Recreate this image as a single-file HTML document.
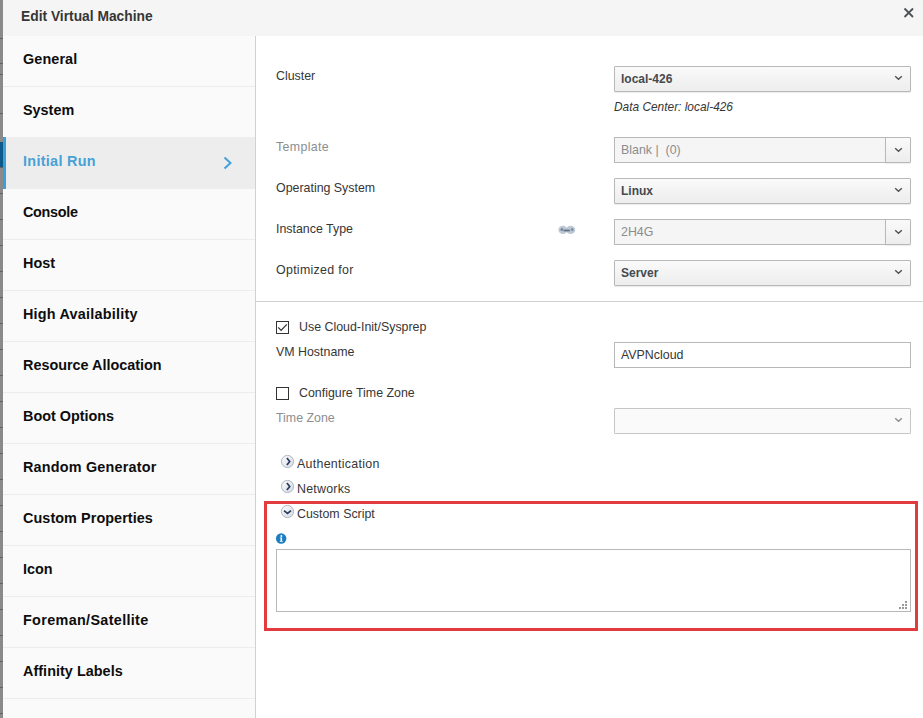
<!DOCTYPE html>
<html><head><meta charset="utf-8">
<style>
*{box-sizing:border-box;margin:0;padding:0}
html,body{width:923px;height:718px;overflow:hidden;background:#fff;font-family:"Liberation Sans",sans-serif}
.a{position:absolute}
.t{position:absolute;white-space:nowrap;line-height:16px}
#strip{left:0;top:0;width:3px;height:718px;background:#8a8a8a;background-image:repeating-linear-gradient(to bottom,transparent 0,transparent 38px,#5f5f5f 38px,#5f5f5f 39px,transparent 39px,transparent 26px)}
#hdr{left:3px;top:0;width:920px;height:36px;background:#f5f5f5}
#side{left:3px;top:36px;width:252px;height:682px;background:#fafafa}
#sideb{left:255px;top:36px;width:1px;height:682px;background:#d1d1d1}
.sep{position:absolute;left:3px;width:252px;height:1px;background:#ececec}
.nav{font-weight:bold;font-size:14.4px;color:#0d0d0d;left:23px}
.lbl{font-size:12.4px;color:#363636;left:276px}
.dis{color:#8b8d8f}
.sel{position:absolute;left:614px;width:297px;height:26px;border:1px solid #b8b8b8;border-radius:1px;background:linear-gradient(#fafafa,#ededed);box-shadow:0 1px 1px rgba(3,3,3,.08)}
.chev{position:absolute;width:9px;height:6px}
.sv{font-size:12px;font-weight:bold;color:#454a50;left:621px}
</style></head><body>
<svg class="a" style="left:0;top:0" width="3" height="718"><rect width="3" height="718" fill="#8a8a8a"/><g fill="#626262"><rect x="0" y="38" width="3" height="1"/><rect x="0" y="63" width="3" height="1"/><rect x="0" y="74" width="3" height="1"/><rect x="0" y="113" width="3" height="1"/><rect x="0" y="167" width="3" height="1"/><rect x="0" y="193" width="3" height="1"/><rect x="0" y="219" width="3" height="1"/><rect x="0" y="245" width="3" height="1"/><rect x="0" y="271" width="3" height="1"/><rect x="0" y="297" width="3" height="1"/><rect x="0" y="323" width="3" height="1"/><rect x="0" y="349" width="3" height="1"/><rect x="0" y="375" width="3" height="1"/><rect x="0" y="401" width="3" height="1"/><rect x="0" y="427" width="3" height="1"/><rect x="0" y="453" width="3" height="1"/><rect x="0" y="479" width="3" height="1"/><rect x="0" y="505" width="3" height="1"/><rect x="0" y="531" width="3" height="1"/><rect x="0" y="557" width="3" height="1"/><rect x="0" y="583" width="3" height="1"/><rect x="0" y="609" width="3" height="1"/><rect x="0" y="635" width="3" height="1"/><rect x="0" y="661" width="3" height="1"/><rect x="0" y="687" width="3" height="1"/><rect x="0" y="713" width="3" height="1"/></g><rect x="0" y="142" width="3" height="25" fill="#0b5a8a"/></svg>
<div id="hdr" class="a"></div>
<div class="t" style="left:21px;top:9px;font-size:13.8px;font-weight:bold;color:#363636">Edit Virtual Machine</div>
<svg class="a" style="left:903px;top:7px" width="12" height="12" viewBox="0 0 12 12"><path d="M1.5 1.5L10 10M10 1.5L1.5 10" stroke="#4d5258" stroke-width="1.8" fill="none"/></svg>

<div id="side" class="a"></div>
<div id="sideb" class="a"></div>
<div class="sep" style="top:86px"></div>
<div class="a" style="left:3px;top:137px;width:252px;height:52px;background:#ededed"></div>
<div class="a" style="left:3px;top:137px;width:3px;height:52px;background:#3c9fd8"></div>
<div class="sep" style="top:239px"></div>
<div class="sep" style="top:290px"></div>
<div class="sep" style="top:341px"></div>
<div class="sep" style="top:392px"></div>
<div class="sep" style="top:443px"></div>
<div class="sep" style="top:494px"></div>
<div class="sep" style="top:545px"></div>
<div class="sep" style="top:596px"></div>
<div class="sep" style="top:647px"></div>
<div class="sep" style="top:698px"></div>

<div class="t nav" style="top:51px;letter-spacing:0.1px">General</div>
<div class="t nav" style="top:102px">System</div>
<div class="t nav" style="top:153px;color:#47a1d6;letter-spacing:0.3px">Initial Run</div>
<div class="t nav" style="top:204px;letter-spacing:-0.3px">Console</div>
<div class="t nav" style="top:255px">Host</div>
<div class="t nav" style="top:306px;letter-spacing:0.22px">High Availability</div>
<div class="t nav" style="top:357px">Resource Allocation</div>
<div class="t nav" style="top:408px">Boot Options</div>
<div class="t nav" style="top:459px;letter-spacing:0.2px">Random Generator</div>
<div class="t nav" style="top:510px;letter-spacing:0.07px">Custom Properties</div>
<div class="t nav" style="top:561px">Icon</div>
<div class="t nav" style="top:612px;letter-spacing:0.33px">Foreman/Satellite</div>
<div class="t nav" style="top:663px;letter-spacing:0.04px">Affinity Labels</div>
<svg class="a" style="left:222px;top:155px" width="12" height="16" viewBox="0 0 12 16"><path d="M2.5 2.5L8.5 8L2.5 13.5" stroke="#45a0d6" stroke-width="2" fill="none"/></svg>

<!-- main -->
<div class="t lbl" style="top:68px">Cluster</div>
<div class="sel" style="top:66px"></div>
<div class="t sv" style="top:71px">local-426</div>
<div class="t" style="left:614px;top:99px;font-size:11.9px;font-style:italic;color:#363636">Data Center: local-426</div>

<div class="t lbl dis" style="top:139px;letter-spacing:0.35px">Template</div>
<div class="t lbl" style="top:180px">Operating System</div>
<div class="t lbl" style="top:221px">Instance Type</div>
<div class="t lbl" style="top:262px;letter-spacing:0.3px">Optimized for</div>

<div class="a" style="left:256px;top:301px;width:667px;height:1px;background:#d1d1d1"></div>

<!-- selects -->
<svg class="chev" style="left:894px;top:75px" width="9" height="6" viewBox="0 0 9 6"><path d="M1.2 1.2L4.5 4.3L7.8 1.2" stroke="#4d5258" stroke-width="1.4" fill="none"/></svg>

<div class="a" style="left:614px;top:137px;width:272px;height:26px;border:1px solid #b8b8b8;background:#f5f5f5"></div>
<div class="sel" style="left:885px;top:137px;width:26px"></div>
<svg class="chev" style="left:894px;top:147px" width="9" height="6" viewBox="0 0 9 6"><path d="M1.2 1.2L4.5 4.3L7.8 1.2" stroke="#4d5258" stroke-width="1.4" fill="none"/></svg>
<div class="t" style="left:621px;top:142px;font-size:12.4px;color:#8b8d8f">Blank |&nbsp; (0)</div>

<div class="sel" style="top:178px"></div>
<svg class="chev" style="left:894px;top:187px" width="9" height="6" viewBox="0 0 9 6"><path d="M1.2 1.2L4.5 4.3L7.8 1.2" stroke="#4d5258" stroke-width="1.4" fill="none"/></svg>
<div class="t sv" style="top:183px">Linux</div>

<div class="a" style="left:614px;top:219px;width:272px;height:26px;border:1px solid #b8b8b8;background:#f5f5f5"></div>
<div class="sel" style="left:885px;top:219px;width:26px"></div>
<svg class="chev" style="left:894px;top:229px" width="9" height="6" viewBox="0 0 9 6"><path d="M1.2 1.2L4.5 4.3L7.8 1.2" stroke="#4d5258" stroke-width="1.4" fill="none"/></svg>
<div class="t" style="left:621px;top:224px;font-size:12.4px;color:#8b8d8f">2H4G</div>

<div class="sel" style="top:260px"></div>
<svg class="chev" style="left:894px;top:269px" width="9" height="6" viewBox="0 0 9 6"><path d="M1.2 1.2L4.5 4.3L7.8 1.2" stroke="#4d5258" stroke-width="1.4" fill="none"/></svg>
<div class="t sv" style="top:265px">Server</div>

<!-- link icon -->
<svg class="a" style="left:558px;top:225px" width="18" height="10" viewBox="0 0 18 10"><ellipse cx="4.9" cy="4.9" rx="4.5" ry="4.1" fill="#bdc8d5"/><ellipse cx="12.6" cy="4.9" rx="4.6" ry="4.1" fill="#bdc8d5"/><ellipse cx="3.9" cy="4.6" rx="1.4" ry="1.5" fill="#75859a"/><rect x="5.6" y="4.6" width="6.2" height="1.8" fill="#627387"/><ellipse cx="14.2" cy="4.6" rx="1.4" ry="1.6" fill="#8190a3"/></svg>

<!-- cloud-init -->
<div class="a" style="left:276px;top:321px;width:13px;height:13px;border:1px solid #333;background:#fff"></div>
<svg class="a" style="left:276px;top:321px" width="13" height="13" viewBox="0 0 13 13"><path d="M2.2 6.4L5.1 9.4L10.8 3.4" stroke="#333" stroke-width="1.3" fill="none"/></svg>
<div class="t lbl" style="left:299px;top:319px">Use Cloud-Init/Sysprep</div>
<div class="t lbl" style="top:344px">VM Hostname</div>
<div class="a" style="left:614px;top:342px;width:297px;height:26px;border:1px solid #b8b8b8;background:#fff"></div>
<div class="t" style="left:621px;top:347px;font-size:12.4px;color:#363636">AVPNcloud</div>

<div class="a" style="left:276px;top:387px;width:13px;height:13px;border:1px solid #333;background:#fff"></div>
<div class="t lbl" style="left:299px;top:385px">Configure Time Zone</div>
<div class="t lbl dis" style="top:410px">Time Zone</div>
<div class="a" style="left:614px;top:408px;width:297px;height:26px;border:1px solid #c6c6c6;border-radius:1px;background:#fafafa"></div>
<svg class="chev" style="left:894px;top:417px" width="9" height="6" viewBox="0 0 9 6"><path d="M1.2 1.2L4.5 4.3L7.8 1.2" stroke="#8b8d8f" stroke-width="1.4" fill="none"/></svg>

<!-- expanders -->
<svg class="a" style="left:280px;top:454px" width="15" height="15" viewBox="0 0 15 15"><defs><linearGradient id="cg" x1="0" y1="0" x2="1" y2="1"><stop offset="0" stop-color="#fdfdfe"/><stop offset="1" stop-color="#d3d9e6"/></linearGradient></defs><circle cx="7.5" cy="7.5" r="6.1" fill="url(#cg)" stroke="#a9aeb6" stroke-width="0.9"/><path d="M6.9 4L9.7 7.5L6.9 11" stroke="#2b3d5b" stroke-width="1.7" fill="none"/></svg>
<div class="t lbl" style="left:297px;top:456px;letter-spacing:0.29px">Authentication</div>
<svg class="a" style="left:280px;top:479px" width="15" height="15" viewBox="0 0 15 15"><circle cx="7.5" cy="7.5" r="6.1" fill="url(#cg)" stroke="#a9aeb6" stroke-width="0.9"/><path d="M6.9 4L9.7 7.5L6.9 11" stroke="#2b3d5b" stroke-width="1.7" fill="none"/></svg>
<div class="t lbl" style="left:297px;top:481px;letter-spacing:0.23px">Networks</div>

<!-- red box -->
<div class="a" style="left:264px;top:501px;width:654px;height:130px;border:3px solid #e13b3f"></div>
<svg class="a" style="left:280px;top:504px" width="15" height="15" viewBox="0 0 15 15"><circle cx="7.5" cy="7.5" r="6.1" fill="url(#cg)" stroke="#a9aeb6" stroke-width="0.9"/><path d="M4 6.6L7.5 9.5L11 6.6" stroke="#2b3d5b" stroke-width="1.7" fill="none"/></svg>
<div class="t lbl" style="left:297px;top:506px">Custom Script</div>
<svg class="a" style="left:275px;top:533px" width="12" height="12" viewBox="0 0 12 12"><circle cx="6.15" cy="5.5" r="5.2" fill="#1b7dc2"/><circle cx="6.4" cy="2.9" r="1" fill="#fff"/><path d="M4.8 4.5H7.1V7.9H7.8V8.7H4.8V7.9H5.5V5.3H4.8Z" fill="#fff"/></svg>
<div class="a" style="left:276px;top:549px;width:635px;height:63px;border:1px solid #b8b8b8;background:#fff"></div>
<svg class="a" style="left:899px;top:601px" width="9" height="9" viewBox="0 0 9 9" shape-rendering="crispEdges"><g fill="#999"><rect x="6" y="0" width="2" height="2"/><rect x="3" y="3" width="2" height="2"/><rect x="6" y="3" width="2" height="2"/><rect x="0" y="6" width="2" height="2"/><rect x="3" y="6" width="2" height="2"/><rect x="6" y="6" width="2" height="2"/></g></svg>
</body></html>
